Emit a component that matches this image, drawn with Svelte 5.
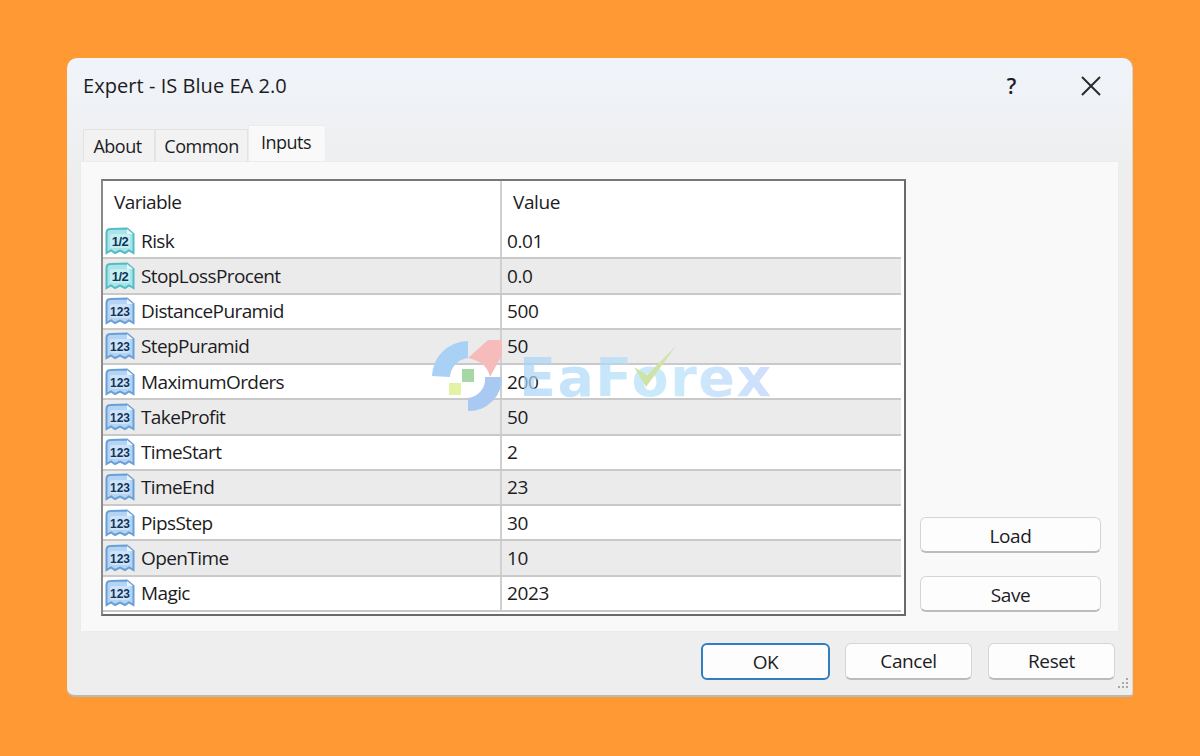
<script>
	const rows = [
		{ name: 'Risk', value: '0.01', kind: 'half' },
		{ name: 'StopLossProcent', value: '0.0', kind: 'half' },
		{ name: 'DistancePuramid', value: '500', kind: 'int' },
		{ name: 'StepPuramid', value: '50', kind: 'int' },
		{ name: 'MaximumOrders', value: '200', kind: 'int' },
		{ name: 'TakeProfit', value: '50', kind: 'int' },
		{ name: 'TimeStart', value: '2', kind: 'int' },
		{ name: 'TimeEnd', value: '23', kind: 'int' },
		{ name: 'PipsStep', value: '30', kind: 'int' },
		{ name: 'OpenTime', value: '10', kind: 'int' },
		{ name: 'Magic', value: '2023', kind: 'int' }
	];
</script>

<main>
	<div class="window">
		<header class="titlebar">
			<span class="title">Expert - IS Blue EA 2.0</span>
			<span class="help">?</span>
			<svg class="close" width="20" height="20" viewBox="0 0 20 20">
				<path d="M1 1 L19 19 M19 1 L1 19" stroke="#2a2a2a" stroke-width="2" fill="none" />
			</svg>
		</header>

		<nav class="tabs">
			<span class="tab">About</span>
			<span class="tab">Common</span>
			<span class="tab active">Inputs</span>
		</nav>

		<section class="panel">
			<div class="grid">
				<div class="head">
					<span class="col-name">Variable</span>
					<span class="col-value">Value</span>
				</div>
				{#each rows as row, i}
					<div class="row" class:alt={i % 2 === 1}>
						<span class="col-name">
							<svg class="icon" width="30" height="28" viewBox="0 0 30 28">
								<path
									d="M1.5 6 Q1.5 2 5.5 2 L22 1.5 L28.5 7 L28.5 26 L24 23.5 L20 26 L15 23.5 L10 26 L6 23.5 L1.5 26 Z"
									fill={row.kind === 'half' ? '#a8e4e8' : '#b4d4f5'}
									stroke={row.kind === 'half' ? '#56bcc4' : '#6a9fd6'}
									stroke-width="2"
								/>
								<rect x="5" y="7" width="20" height="14" rx="2" fill={row.kind === 'half' ? '#c4eff0' : '#cfe3f8'} />
								<path d="M22 2 L22 7 L28 7 Z" fill="#eef6fb" />
								<text
									x="15"
									y="19"
									text-anchor="middle"
									font-family="Liberation Sans, sans-serif"
									font-weight="700"
									font-size={row.kind === 'half' ? 13 : 12}
									letter-spacing={row.kind === 'half' ? -0.5 : 0}
									fill="#10355a">{row.kind === 'half' ? '1/2' : '123'}</text
								>
							</svg>
							<span class="label">{row.name}</span>
						</span>
						<span class="col-value">{row.value}</span>
					</div>
				{/each}
				<div class="watermark">
					<svg width="74" height="76" viewBox="0 0 74 76">
						<path d="M38 3 A36 36 0 0 0 2 38 L20 39 A20 20 0 0 1 38 20 Z" fill="#a9d0f5" />
						<path d="M38 20 L58 2 L72 2 L72 17 L60 39 Q57 24 38 20 Z" fill="#f6bcbc" />
						<path d="M72 39 A33 33 0 0 1 38 73 L38 60 A19 19 0 0 0 55 39 Z" fill="#a9c9f3" />
						<rect x="32" y="31" width="12" height="13" fill="#a6d8a6" />
						<rect x="19" y="45" width="12" height="12" fill="#e4f2a8" />
					</svg>
					<span class="brand">EaForex</span>
					<svg class="check" width="44" height="44" viewBox="0 0 44 44">
						<path d="M1 22 L13 42 L43 1 L14 30 Z" fill="#cfe3a6" />
					</svg>
				</div>
			</div>

			<div class="side">
				<button>Load</button>
				<button>Save</button>
			</div>
		</section>

		<footer class="actions">
			<button class="primary">OK</button>
			<button>Cancel</button>
			<button>Reset</button>
			<svg class="grip" width="14" height="14" viewBox="0 0 14 14">
				<g fill="#a8a8a8">
					<rect x="9" y="1" width="2" height="2" />
					<rect x="5" y="5" width="2" height="2" />
					<rect x="9" y="5" width="2" height="2" />
					<rect x="1" y="9" width="2" height="2" />
					<rect x="5" y="9" width="2" height="2" />
					<rect x="9" y="9" width="2" height="2" />
				</g>
			</svg>
		</footer>
	</div>
</main>

<style>
	:global(body) {
		margin: 0;
		background: #ff9933;
	}
	main {
		width: 1200px;
		height: 756px;
		padding: 58px 67px 0;
		box-sizing: border-box;
		font-family: 'Open Sans', 'Noto Sans', sans-serif;
		font-size: 19px;
		letter-spacing: -0.4px;
		color: #1c1c24;
	}
	.window {
		height: 639px;
		box-sizing: border-box;
		padding: 0 13px;
		display: flex;
		flex-direction: column;
		border-radius: 10px 10px 4px 8px;
		border-bottom: 2px solid #b9b9b9;
		border-right: 1px solid #d6d6d6;
		background: linear-gradient(#f0f4fa, #eeeeee 120px);
	}
	.titlebar {
		height: 57px;
		flex: none;
		box-sizing: border-box;
		padding: 0 2px 2px 3px;
		display: flex;
		align-items: center;
	}
	.title {
		flex: 1;
		font-size: 20px;
		letter-spacing: 0.05px;
	}
	.help {
		font-size: 21px;
		font-weight: 600;
		margin-right: 65px;
	}
	.close {
		margin-right: 16px;
	}
	.tabs {
		height: 46px;
		flex: none;
		display: flex;
		align-items: flex-end;
		padding-left: 3px;
		font-size: 18px;
		letter-spacing: -0.5px;
	}
	.tab {
		width: 72px;
		height: 32px;
		box-sizing: border-box;
		padding-right: 3px;
		display: flex;
		align-items: center;
		justify-content: center;
		border: 1px solid #e3e3e3;
		border-bottom: none;
		background: #f2f2f2;
	}
	.tab:nth-child(2) {
		width: 93px;
		padding-right: 0;
	}
	.tab.active {
		width: 78px;
		height: 36px;
		padding: 0 2px 4px 0;
		background: #f9f9f9;
		border-color: #ececec;
	}
	.panel {
		height: 471px;
		flex: none;
		box-sizing: border-box;
		padding: 17px 17px 16px 20px;
		display: flex;
		background: #f9f9f9;
		border: 1px solid #ececec;
	}
	.grid {
		position: relative;
		width: 805px;
		height: 437px;
		box-sizing: border-box;
		background: #fff;
		border: 2px solid #6f6f6f;
		border-color: #777 #6a6a6a #6a6a6a #8a8a8a;
		padding-right: 3px;
	}
	.head {
		height: 43px;
		display: flex;
		align-items: center;
	}
	.head .col-name {
		padding: 0 0 2px 11px;
	}
	.head .col-value {
		padding: 0 0 2px 11px;
	}
	.col-name {
		width: 399px;
		height: 100%;
		flex: none;
		box-sizing: border-box;
		display: flex;
		align-items: center;
		border-right: 2px solid #d0d0d0;
		letter-spacing: -0.6px;
	}
	.col-value {
		padding-left: 5px;
	}
	.row {
		height: 35.25px;
		box-sizing: border-box;
		display: flex;
		align-items: center;
		border-bottom: 2px solid #c9c9c9;
	}
	.row.alt {
		background: #ebebeb;
	}
	.icon {
		margin: 0 6px 0 2px;
		flex: none;
	}
	.watermark {
		position: absolute;
		left: 327px;
		top: 157px;
		display: flex;
		align-items: center;
		pointer-events: none;
	}
	.brand {
		margin: 3px 0 0 15px;
		font-family: 'DejaVu Sans', sans-serif;
		font-size: 54px;
		font-weight: 700;
		letter-spacing: 1.5px;
		line-height: 1;
		color: transparent;
		background: linear-gradient(90deg, #a9d3f7, #b6e3fb 60%, #bcd0fa);
		background-clip: text;
		-webkit-background-clip: text;
		opacity: 0.7;
	}
	.check {
		position: absolute;
		left: 203px;
		top: 7px;
	}
	.side {
		margin-left: 14px;
		flex: 1;
		display: flex;
		flex-direction: column;
		justify-content: flex-end;
		gap: 23px;
		padding-bottom: 3px;
	}
	.side button {
		height: 36px;
		padding-top: 2px;
	}
	button {
		height: 37px;
		box-sizing: border-box;
		padding: 0;
		background: #fdfdfd;
		border: 1px solid #d5d5d5;
		border-bottom: 2px solid #bcbcbc;
		border-radius: 6px;
		font: inherit;
		letter-spacing: inherit;
		color: inherit;
	}
	.actions {
		position: relative;
		flex: 1;
		display: flex;
		justify-content: flex-end;
		align-items: flex-start;
		gap: 16px;
		padding: 11px 4px 0 0;
	}
	.actions button {
		width: 127px;
	}
	.actions .primary {
		width: 129px;
		margin-right: -1px;
		border: 2px solid #2f7fc1;
	}
	.grip {
		position: absolute;
		right: -12px;
		bottom: 4px;
	}
</style>
